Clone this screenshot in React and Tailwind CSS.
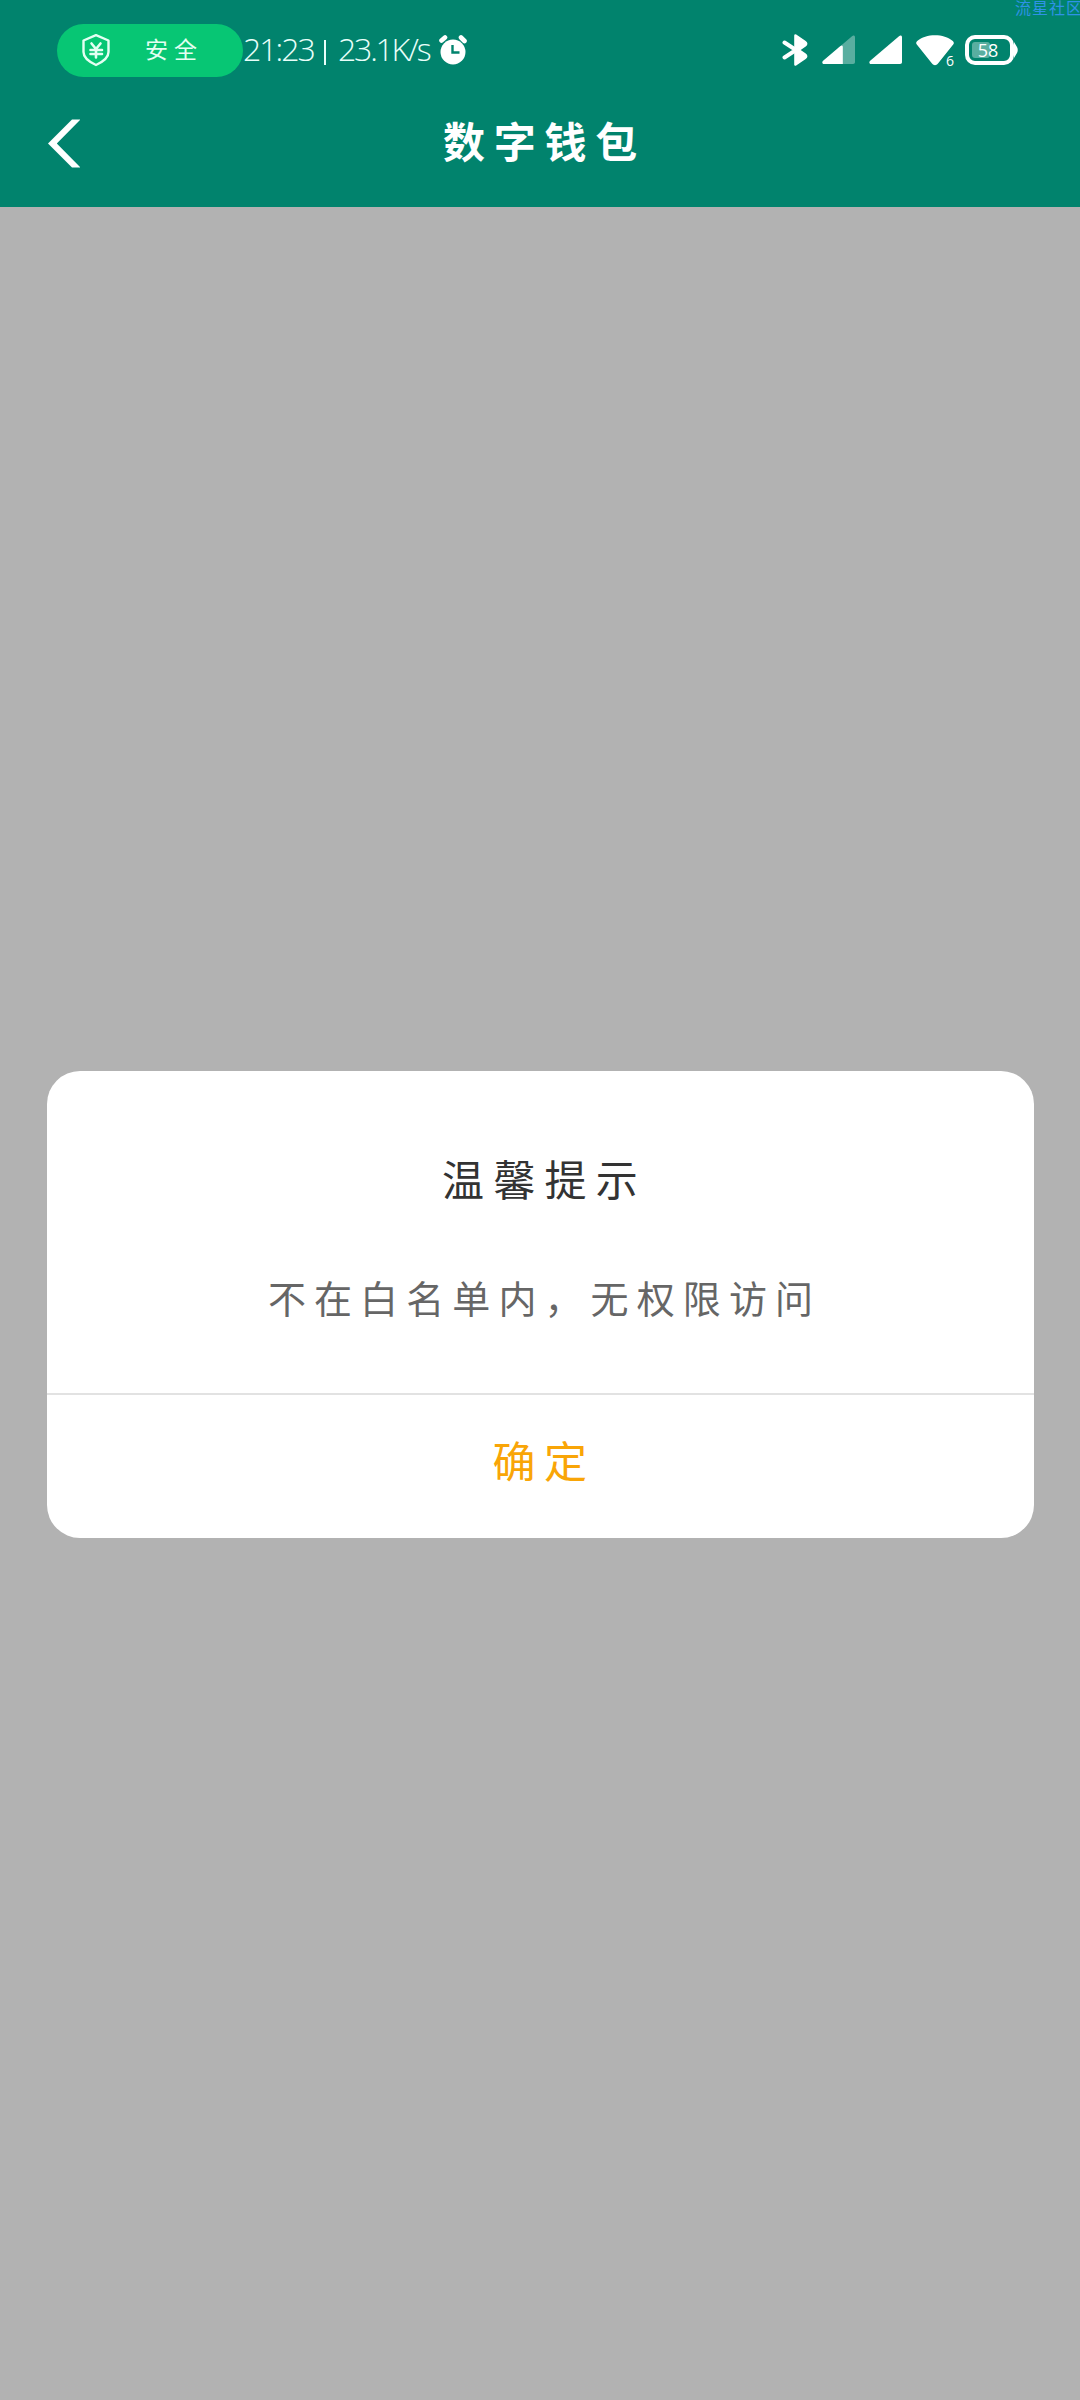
const fontStack = "font-['Noto_Sans_CJK_SC',sans-serif]";

function ShieldIcon() {
  return (
    <svg className="w-[30px] h-[34px]" viewBox="0 0 30 34" fill="none" stroke="#e4fff2">
      <path d="M15 2.2 27.500 7.500V19c0 5.500-5.500 9.800-12.500 13C8 28.800 2.500 24.500 2.500 19V7.500Z" strokeWidth="2.4" strokeLinejoin="round" />
      <path d="M10.500 10.500 15 16l4.500-5.500M9.500 17h11.500M9.500 21h11.500M15 16v8.500" strokeWidth="2.6" strokeLinecap="round" />
    </svg>
  );
}

function AlarmIcon() {
  return (
    <svg className="w-[28px] h-[30px]" viewBox="0 0 28 30" fill="none">
      <circle cx="14" cy="17" r="12.500" fill="#fff" />
      <path d="M2.500 5.500 6 2.500M22 2.500l3.500 3.500" stroke="#fff" strokeWidth="4.600" strokeLinecap="round" />
      <path d="M13.500 10v7.500h7" stroke="#01836d" strokeWidth="2.400" />
    </svg>
  );
}

function BluetoothIcon() {
  return (
    <svg className="w-[27px] h-[32px]" viewBox="0 0 27 32" fill="#fff" stroke="#fff">
      <path d="M13.500 1.500 23 8c1.500 1 1.500 2.500 0 3.500L16.500 16l6.500 4.500c1.500 1 1.500 2.500 0 3.500l-9.500 6.500Z" strokeWidth="2.600" strokeLinejoin="round" />
      <path d="M2.500 8.500 14 16 2.500 23.500" fill="none" strokeWidth="4" strokeLinecap="round" />
    </svg>
  );
}

function SignalIcon({ weak }) {
  return (
    <svg className="w-[34px] h-[30px]" viewBox="0 0 34 30" fill="#fff">
      <path
        d="M2 29C.2 29-.2 27 1.200 25.800L30 1.200C31.500 0 33 .6 33 2.400V27c0 1.300-.7 2-2 2Z"
        opacity={weak ? 0.35 : 1}
      />
      {weak && <path d="M2 29C.2 29-.2 27 1.200 25.800L18.500 11q2.300-1.600 2.300 1V29Z" />}
    </svg>
  );
}

function WifiIcon() {
  return (
    <svg className="w-[38px] h-[32px]" viewBox="0 0 38 32" fill="#fff">
      <path d="M1.200 7C10-.8 28-.8 36.800 7c1.200 1.200 1.400 2.400.4 3.600L22 29.500c-1.900 2.200-4.100 2.200-6 0L.8 10.600C-.2 9.400 0 8.200 1.200 7Z" />
    </svg>
  );
}

function Battery() {
  return (
    <div className="flex items-center">
      <div className="relative flex h-[30px] w-[49px] items-center rounded-[10px] border-4 border-white px-[3px]">
        <div className="h-4 w-[18px] rounded-[3px] bg-white/35" />
        <span className="absolute inset-0 flex items-center justify-center pr-[3px] font-['Open_Sans',sans-serif] text-[18px] text-white">
          58
        </span>
      </div>
      <svg className="w-[4px] h-[16px]" viewBox="0 0 4 16" fill="#fff">
        <path d="M0 0 3 5q1.500 3 0 6L0 16Z" />
      </svg>
    </div>
  );
}

function StatusBar() {
  return (
    <div className="flex h-[100px] items-center pl-[57px] pr-[62px]">
      <div className="flex h-[53px] w-[186px] items-center rounded-full bg-[#07c674] pl-[24px]">
        <ShieldIcon />
        <span className="ml-[34px] pb-[3px] text-[23px] leading-none tracking-[6px] text-[#e4fff2]">安全</span>
      </div>
      <div className="flex flex-1 items-center font-['Open_Sans',sans-serif] text-[32px] leading-none font-light text-[#e8fffa]">
        <span className="w-[77px] pb-[2px] tracking-[-2px]">21:23</span>
        <span className="mt-[4px] mr-[12px] ml-[4px] h-[25px] w-[2px] bg-[#e8fffa]" />
        <span className="w-[101px] pb-[2px] tracking-[-2.200px]">23.1K/s</span>
        <AlarmIcon />
      </div>
      <div className="flex items-center">
        <BluetoothIcon />
        <div className="ml-[13px]">
          <SignalIcon weak />
        </div>
        <div className="ml-[13px]">
          <SignalIcon />
        </div>
        <div className="relative ml-[13px] mr-[11px]">
          <WifiIcon />
          <span className="absolute right-0 -bottom-[2px] font-['Open_Sans',sans-serif] text-[14px] leading-none text-white">6</span>
        </div>
        <Battery />
      </div>
    </div>
  );
}

function TitleBar() {
  return (
    <div className="grid h-[107px] grid-cols-[120px_1fr_120px] items-start">
      <button className="mt-[19px] ml-[48px] w-[32px]">
        <svg className="w-[32px] h-[49px]" viewBox="0 0 32 49" fill="#fff">
          <path d="M0 24.500 24 .5h8.500L8.800 24.500l23.700 24H24Z" />
        </svg>
      </button>
      <h1 className="mt-[17px] pl-[9px] text-center text-[42px] leading-[46px] font-bold tracking-[8.700px] text-white">
        数字钱包
      </h1>
    </div>
  );
}

function Dialog() {
  return (
    <div className="mx-auto flex h-[467px] w-[987px] flex-col overflow-hidden rounded-[33px] bg-white text-center">
      <div className="flex h-[322px] flex-col">
        <h2 className="mt-[84px] pl-[9px] text-[42px] leading-[46px] tracking-[9.300px] text-[#333]">
          温馨提示
        </h2>
        <p className="mt-[73px] pl-[9px] text-[38px] leading-[46px] tracking-[8.100px] text-[#666]">
          不在白名单内，无权限访问
        </p>
      </div>
      <button className="flex-1 border-t-2 border-[#e2e2e2] pb-[15px] pl-[8px] text-[43px] leading-none tracking-[8.500px] text-[#f9a507]">
        确定
      </button>
    </div>
  );
}

export default function App() {
  return (
    <div className={`relative h-[2400px] w-[1080px] overflow-hidden bg-[#b2b2b2] ${fontStack}`}>
      <header className="h-[207px] bg-[#01836d]">
        <StatusBar />
        <TitleBar />
      </header>
      <main className="pt-[864px]">
        <Dialog />
      </main>
      {/* corner watermark, runs off the right edge */}
      <span className="absolute top-0 left-[1015px] whitespace-nowrap text-[16px] leading-[15px] tracking-[1px] text-[#2f92e6]">
        流星社区
      </span>
    </div>
  );
}
